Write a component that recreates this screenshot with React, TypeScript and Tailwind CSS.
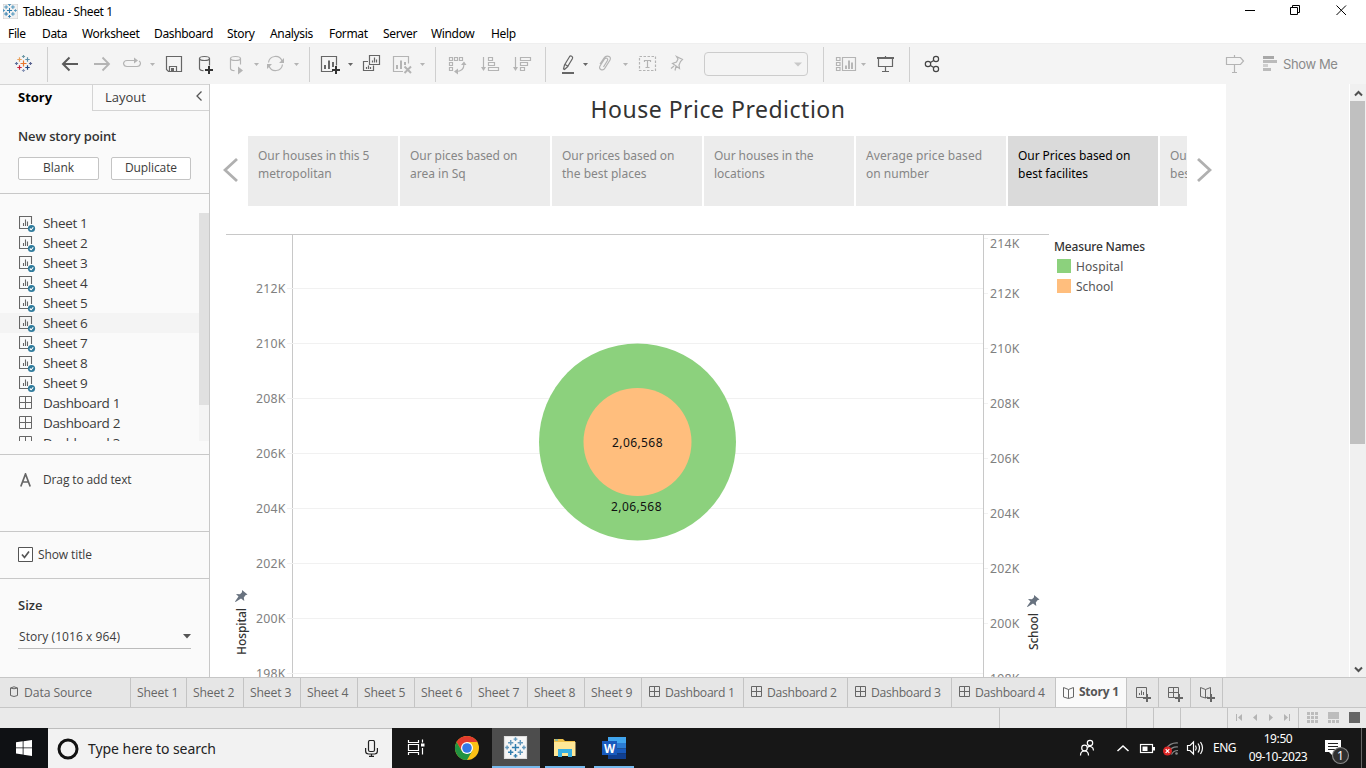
import React from "react";

type IcoProps = { x: number; y: number; w: number; h: number; children?: React.ReactNode; color?: string };

/* An icon cell: its drawing shares one coordinate system with its neighbours. */
function Ico({ x, y, w, h, children, color = "#b4b4b4" }: IcoProps) {
  return (
    <svg className="block shrink-0" width={w} height={h} viewBox={`${x} ${y} ${w} ${h}`} fill="none" stroke={color} strokeWidth="1.2">
      {children}
    </svg>
  );
}

const DARK = "#666";
const LIGHT = "#b4b4b4";

function Tool({ x, w, color, children }: { x: number; w: number; color?: string; children?: React.ReactNode }) {
  return <Ico x={x} y={43} w={w} h={41} color={color}>{children}</Ico>;
}

function Caret({ x, color = LIGHT }: { x: number; color?: string }) {
  return <path d={`M${x} 63h5l-2.5 3z`} fill={color} stroke="none" />;
}

function Rule({ x }: { x: number }) {
  return <path d={`M${x}.5 47v35`} stroke="#cfcfcf" strokeWidth="1" />;
}

function Plus({ x, y, s, c, w = 1.2 }: { x: number; y: number; s: number; c: string; w?: number }) {
  return <path d={`M${x - s} ${y}h${2 * s}M${x} ${y - s}v${2 * s}`} stroke={c} strokeWidth={w} />;
}

function Sparkle({ cx, cy, k, colors }: { cx: number; cy: number; k: number; colors: string[] }) {
  const pts: [number, number, number][] = [
    [0, 0, 3], [-4, -4, 2.2], [4, -4, 2.2], [-4, 4, 2.2], [4, 4, 2.2],
    [0, -7, 1.6], [0, 7, 1.6], [-7, 0, 1.6], [7, 0, 1.6],
  ];
  return <>{pts.map(([dx, dy, s], i) => <Plus key={i} x={cx + dx * k} y={cy + dy * k} s={s * k} c={colors[i % colors.length]} w={1.2 * k} />)}</>;
}

function Toolbar() {
  return (
    <div className="flex h-[41px] shrink-0 border-t border-[#efefef] bg-[#f4f4f4]">
      <div className="-mt-px flex h-[41px]">
        <Tool x={0} w={48}>
          <Sparkle cx={23.5} cy={63.5} k={1} colors={["#e8762c", "#e8a05c", "#5b8fa8", "#c72037", "#1f457e", "#7099a6", "#8a97b8", "#5c6f9a", "#5c6692"]} />
          <Rule x={47} />
        </Tool>
        <Tool x={48} w={39} color="#5b5b5b"><path d="M78 64H63M69.500 57.500L63 64l6.500 6.500" strokeWidth="2" /></Tool>
        <Tool x={87} w={32}><path d="M94 64h15M102.500 57.500L109 64l-6.500 6.500" strokeWidth="1.800" /></Tool>
        <Tool x={119} w={40}>
          <path d="M134 60.500H127a3.500 3.500 0 0 0-3.500 3v0a3.500 3.500 0 0 0 3.500 3h10a3.500 3.500 0 0 0 3.500-3v0a3 3 0 0 0-1.500-2.500" />
          <path d="M134 57.500l4 3-4 3z" fill={LIGHT} stroke="none" /><Caret x={150} />
        </Tool>
        <Tool x={159} w={32} color={DARK}><path d="M166.500 56.500h15v15h-13l-2-2zM169.500 71.500v-5h7v5" /><path d="M171 68h3v3h-3z" fill={DARK} stroke="none" /></Tool>
        <Tool x={191} w={32} color={DARK}>
          <ellipse cx="204.500" cy="58.500" rx="5" ry="2" /><path d="M199.500 58.500v10c0 1.200 1.500 2 4 2.200M209.500 58.500v7" />
          <Plus x={209} y={70} s={4} c="#333" w={2} />
        </Tool>
        <Tool x={223} w={40}>
          <ellipse cx="235.500" cy="58.500" rx="5" ry="2" /><path d="M230.500 58.500v10c0 1.200 1.500 2 4 2.200M240.500 58.500v6" />
          <path d="M238 66.500l5 4-5 4z" fill={LIGHT} stroke="none" /><Caret x={254} />
        </Tool>
        <Tool x={263} w={52}>
          <path d="M268.500 62.500a7 7 0 0 1 13.500-1.500M282.500 64.500a7 7 0 0 1-13.500 1.500" />
          <path d="M284 58v5h-5zM267 69v-5h5z" fill={LIGHT} stroke="none" /><Caret x={294} /><Rule x={309} />
        </Tool>
        <Tool x={315} w={42} color={DARK}>
          <path d="M333 71.500h-11.500v-15h15v9" /><path d="M325 69v-4M329 69v-8.500M333 67v-5" strokeWidth="2" />
          <Plus x={336} y={70} s={4} c="#333" w={2} /><Caret x={348} color={DARK} />
        </Tool>
        <Tool x={357} w={30} color={DARK}>
          <path d="M369.500 55.500h10v9h-10zM368 61.500h-4.500v9h10v-5" /><path d="M372.500 62.500v-2M374.500 62.500v-5M376.500 62.500v-3M366.500 69v-2M368.500 69v-3.500M370.500 69v-2" />
        </Tool>
        <Tool x={387} w={54}>
          <path d="M403 71.500h-9.500v-15h15v7" /><path d="M397 69v-4M401 69v-8.500M405 65v-3" strokeWidth="2" />
          <path d="M404.500 66.500l6.500 6.500M411 66.500l-6.500 6.500" strokeWidth="2" /><Caret x={420} /><Rule x={435} />
        </Tool>
        <Tool x={441} w={32}>
          <path d="M449.500 57.500h3v3h-3zM454.500 57.500h3v3h-3zM459.500 57.500h3v3h-3zM449.500 62.500h3v3h-3zM449.500 67.500h3v3h-3zM464 64c0 4.500-2 7.500-8 7.500" />
          <path d="M461 65l3-3.500 2.500 3.500zM458 68.500l-4 3 4 3z" fill={LIGHT} stroke="none" />
        </Tool>
        <Tool x={473} w={33}>
          <path d="M483.500 57v11M488.500 57.500h4v3h-4zM488.500 62.500h6v3h-6zM488.500 67.500h10v3h-10z" /><path d="M481 67h5l-2.500 4z" fill={LIGHT} stroke="none" />
        </Tool>
        <Tool x={506} w={46}>
          <path d="M515.500 57v11M520.500 57.500h10v3h-10zM520.500 62.500h7v3h-7zM520.500 67.500h4v3h-4z" /><path d="M513 67h5l-2.500 4z" fill={LIGHT} stroke="none" /><Rule x={545} />
        </Tool>
        <Tool x={552} w={41} color={DARK}>
          <path d="M563.500 69l1-4 5-8.300q.8-1.200 2.200-.4t.8 2.200l-5 8.300-3 2.700z M565 64.500l3.500 2" />
          <path d="M562 73h12" strokeWidth="2" /><Caret x={583} color={DARK} />
        </Tool>
        <Tool x={593} w={40}>
          <path d="M600 64l4-6c2-3 8-2 6 2l-5 8c-2 3.500-7 1.500-5-2l4.500-7c1.300-2 4-.5 3 1.500l-4 6.500" /><Caret x={623} />
        </Tool>
        <Tool x={633} w={31}>
          <path d="M639.500 56.500h16v14h-16z" strokeDasharray="2.500 1.500" /><path d="M644.500 62v-1.500h6V62M647.500 60.500v7M645.500 67.500h4" />
        </Tool>
        <Tool x={664} w={40}>
          <path d="M676.500 56.500l6 3-2 2-1.500 3.500.5 3.500-7-5 4-1.500 1.500-3zM676 66.500l-1 4M674 66l-3 2.500" />
        </Tool>
      </div>
      <div className="mt-2 flex h-6 w-[104px] items-center justify-end rounded-sm border border-[#ccc] pr-[5px]">
        <svg width="8" height="5" viewBox="0 0 8 5"><path d="M0 .5h8L4 4.500z" fill="#c8c8c8" /></svg>
      </div>
      <div className="-mt-px flex h-[41px]">
        <Tool x={808} w={62}>
          <Rule x={823} />
          <path d="M836.500 57.500h3.500v3h-3.500zM836.500 62.500h3.500v3h-3.500zM836.500 67.500h3.500v3h-3.500zM842.500 57.500h13v13h-13z" />
          <path d="M846 69v-3.500M849 69v-8.500M852 69v-6.500" strokeWidth="1.900" /><Caret x={861} />
        </Tool>
        <Tool x={870} w={46} color={DARK}>
          <path d="M877 58h17" strokeWidth="2" /><path d="M878.500 58v8.500h14V58M885.500 66.500v5M882 71.500h7M885.500 56v2" /><Rule x={909} />
        </Tool>
        <Tool x={916} w={40} color="#444">
          <circle cx="928" cy="64" r="2.700" /><circle cx="936" cy="59" r="2.600" /><circle cx="936" cy="69" r="2.600" /><path d="M930.500 62.500l3.200-2M930.500 65.500l3.200 2" />
        </Tool>
      </div>
      <div className="-mt-px ml-auto flex h-[41px] items-center">
        <Tool x={1220} w={36}><path d="M1226.500 57.500h14l3 3.500-3 3.500h-14zM1234.500 55v2.500M1234.500 64.500v8M1232 72.500h5" /></Tool>
        <Tool x={1256} w={27}>
          <g stroke="none" fill="#b4b4b4"><path d="M1263 56h11v3h-11z" fill="#a8a8a8" /><path d="M1263 60h14v3h-14zM1263 68h8v3h-8z" fill="#bbb" /><path d="M1263 64h5v3h-5z" fill="#cfcfcf" /></g>
        </Tool>
        <span className="w-[83px] font-[Inter,sans-serif] text-[13px] leading-4 tracking-[-0.4px] text-[#8a8a8a]">Show Me</span>
      </div>
    </div>
  );
}

function SheetIcon() {
  return (
    <svg className="shrink-0" width="17" height="17" viewBox="0 0 17 17" fill="none" stroke="#666" strokeWidth="1.1">
      <path d="M9 12.500H.5V.5h12V8" /><path d="M4.500 10V7M6.500 10V3.500M8.500 10V5.500" />
      <circle cx="12.500" cy="12.500" r="3.600" fill="#2f7a9b" stroke="none" /><path d="M10.800 12.500l1.300 1.300 2.200-2.400" stroke="#fff" />
    </svg>
  );
}
function GridIcon({ s = 13 }: { s?: number }) {
  const e = s - 0.5;
  const m = Math.floor(s / 2) + 0.5;
  return (
    <svg className="block shrink-0" width={s} height={s} fill="none" stroke="#666">
      <path d={`M.5 .5H${e}V${e}H.5zM${m} .5V${e}M.5 ${m}H${e}`} />
    </svg>
  );
}
function BookIcon() {
  return (
    <svg className="shrink-0" width="11" height="12" viewBox="0 0 11 12" fill="none" stroke="#666">
      <path d="M.5 .5l5 2 5-2v9.500l-5 1.500-5-1.500zM5.500 2.500v9" />
    </svg>
  );
}

const side = ["Sheet 1", "Sheet 2", "Sheet 3", "Sheet 4", "Sheet 5", "Sheet 6", "Sheet 7", "Sheet 8", "Sheet 9", "Dashboard 1", "Dashboard 2", "Dashboard 3"];

function SidePanel() {
  return (
    <aside className="flex w-[210px] shrink-0 flex-col border-r border-[#c8c8c8] bg-[#fafafa] font-['Open_Sans',sans-serif] text-[#3c3c3c]">
      <div className="flex h-[27px] shrink-0">
        <div className="w-[92px] border-t border-[#d4d4d4] pt-[3px] pl-[18px] text-[13px] leading-[19px] font-bold text-black">Story</div>
        <div className="flex flex-1 items-start justify-between border-y border-l border-[#d4d4d4] pt-[3px] pr-[7px] pl-3 text-[13px] leading-[19px]">
          <span>Layout</span>
          <svg className="mt-[3px]" width="6" height="10" fill="none" stroke="#555" strokeWidth="1.300"><path d="M5.500 .5L1 5l4.500 4.500" /></svg>
        </div>
      </div>
      <div className="h-[83px] shrink-0 border-b border-[#c8c8c8] px-[18px] pt-4">
        <div className="text-[13px] leading-[18px] font-semibold tracking-[-0.13px] text-[#333]">New story point</div>
        <div className="mt-3 flex gap-3 text-[12px]">
          <div className="flex h-[23px] w-[81px] items-center justify-center rounded-[2px] border border-[#c4c4c4] bg-white pb-px">Blank</div>
          <div className="flex h-[23px] w-20 items-center justify-center rounded-[2px] border border-[#c4c4c4] bg-white pb-px tracking-[-0.1px]">Duplicate</div>
        </div>
      </div>
      <div className="h-[261px] shrink-0 border-b border-[#c8c8c8] pt-[19px]">
        <div className="flex h-[228px] overflow-hidden">
          <div className="w-[199px]">
            {side.map((s, i) => (
              <div key={s} className={i === 5 ? "flex h-5 items-start bg-[#f4f4f4] pt-[3px] pl-[19px]" : "flex h-5 items-start pt-[3px] pl-[19px]"}>
                <span className="w-6 shrink-0">{i < 9 ? <SheetIcon /> : <GridIcon />}</span>
                <span className="-mt-0.5 text-[13.500px] leading-[18px] tracking-[-0.35px]">{s}</span>
              </div>
            ))}
          </div>
          <div className="w-2.5 bg-[#f4f4f4]"><div className="h-48 bg-[#e0e0e0]" /></div>
        </div>
      </div>
      <div className="flex h-[77px] shrink-0 items-start border-b border-[#c8c8c8] pt-4 pl-5 text-[12px]">
        <svg width="12" height="14" className="mt-[2px] mr-[11px]" fill="none" stroke="#666" strokeWidth="1.700"><path d="M.8 13.500L5.500 1l4.700 12.500M2.500 9h6" /></svg>
        <span className="leading-[18px] tracking-[-0.13px]">Drag to add text</span>
      </div>
      <div className="flex h-[47px] shrink-0 items-center border-b border-[#c8c8c8] pb-px pl-[18px] text-[12px] tracking-[-0.1px]">
        <svg width="15" height="15" className="mr-[5px]" fill="none" stroke="#555"><path d="M.5 .5h14v14H.5z" fill="#fff" /><path d="M4 7.500l2.500 3L11 4.500" strokeWidth="1.700" /></svg>
        <span>Show title</span>
      </div>
      <div className="px-[18px] pt-[17px]">
        <div className="text-[13px] leading-[18px] font-semibold text-[#333]">Size</div>
        <div className="mt-[11px] flex h-6 w-[173px] items-center justify-between border-b border-[#bbb] pl-px text-[12px] tracking-[0.07px]">
          Story (1016 x 964)
          <svg width="8" height="5"><path d="M0 0h8L4 4.500z" fill="#555" /></svg>
        </div>
      </div>
    </aside>
  );
}

const cards: [string, string][] = [
  ["Our houses in this 5", "metropolitan"],
  ["Our pices based on", "area in Sq"],
  ["Our prices based on", "the best places"],
  ["Our houses in the", "locations"],
  ["Average price based", "on number"],
  ["Our Prices based on", "best facilites"],
];

function Pin({ x, y }: { x: number; y: number }) {
  return <path transform={`translate(${x} ${y})`} d="M7 0l5.500 4.500-2 .8-1.700 2.200.5 3.500-3.300-2.500L.5 12l-.5-.5L3.500 6.500 1 4l4 .2L7 2.200z" fill="#68727f" />;
}

function Chart() {
  return (
    <svg className="mt-7 ml-4 block shrink-0 font-['Noto_Sans',sans-serif]" width="823" height="443" viewBox="226 234 823 443">
      <path d="M226 234.500h823M292.500 234v443M983.500 234v443" stroke="#c8c8c8" />
      <path d="M287 288.500h696M287 343.500h696M287 398.500h696M287 453.500h696M287 508.500h696M287 563.500h696M287 618.500h696M287 673.500h696M984 238.500h4M984 293.500h4M984 348.500h4M984 403.500h4M984 458.500h4M984 513.500h4M984 568.500h4M984 623.500h4" stroke="#f1f1f1" />
      <g fontSize="12.300" fill="#808080">
        {[212, 210, 208, 206, 204, 202, 200, 198].map((n, i) => <text key={n} x="256" y={293 + i * 55} textLength="29.300">{n}K</text>)}
        <text x="990" y="248" textLength="29.300">214K</text>
        {[212, 210, 208, 206, 204, 202, 200, 198].map((n, i) => <text key={n} x="990" y={298 + i * 55} textLength="29.300">{n}K</text>)}
      </g>
      <circle cx="637.500" cy="442" r="98.500" fill="#8cd17d" />
      <circle cx="637.500" cy="442" r="54" fill="#ffbe7d" />
      <g fontSize="12" fill="#111">
        <text x="612" y="447" textLength="50.500">2,06,568</text>
        <text x="611" y="511" textLength="50.500">2,06,568</text>
      </g>
      <g fontSize="12" fill="#333" fontWeight="500">
        <text transform="translate(246 655) rotate(-90)" textLength="47">Hospital</text>
        <text transform="translate(1038 650) rotate(-90)" textLength="37">School</text>
      </g>
      <Pin x={235} y={590} /><Pin x={1027} y={595} />
    </svg>
  );
}

function Story() {
  return (
    <main className="flex min-w-0 flex-1 bg-[#f4f4f4]">
      <div className="w-[1016px] shrink-0 overflow-hidden bg-white font-['Noto_Sans',sans-serif]">
        <h1 className="h-[52px] pt-2 text-center text-[23px] leading-[34px] text-[#333]"><span className="tracking-[0.5px]">House Price Prediction</span></h1>
        <div className="flex h-[70px] items-center">
          <svg className="mr-2.5 mb-0.5 ml-[13px] shrink-0" width="15" height="26" fill="none" stroke="#b0b0b0" strokeWidth="2.800"><path d="M14 2L2 13l12 11" /></svg>
          <div className="flex h-[70px] w-[939px] gap-0.5 overflow-hidden text-[12px] leading-[18px]">
            {cards.map(([a, b], i) => (
              <div key={i} className={i === 5 ? "w-[150px] shrink-0 bg-[#dadada] pt-[11px] pl-2.5 text-black" : "w-[150px] shrink-0 bg-[#ececec] pt-[11px] pl-2.5 text-[#868686]"}>
                <div className={i === 4 ? "tracking-[0.1px] whitespace-nowrap" : "tracking-[-0.06px] whitespace-nowrap"}>{a}</div><div>{b}</div>
              </div>
            ))}
            <div className="w-[150px] shrink-0 bg-[#ececec] pt-[11px] pl-2.5 text-[#868686]">Our<br />best</div>
          </div>
          <svg className="mb-0.5 ml-2.5 shrink-0" width="15" height="26" fill="none" stroke="#b0b0b0" strokeWidth="2.800"><path d="M1 2l12 11L1 24" /></svg>
        </div>
        <div className="flex">
          <Chart />
          <div className="mt-8 ml-[5px] text-[12px] text-[#555]">
            <div className="leading-[18px] font-medium tracking-[-0.18px] whitespace-nowrap text-[#333]">Measure Names</div>
            <div className="flex h-5 items-center gap-[5px] pl-[3px]"><i className="size-3.5 bg-[#8cd17d]" /><span className="mt-0.5 tracking-[0.1px]">Hospital</span></div>
            <div className="flex h-5 items-center gap-[5px] pl-[3px]"><i className="size-3.5 bg-[#ffbe7d]" /><span className="mt-0.5">School</span></div>
          </div>
        </div>
      </div>
      <div className="ml-auto flex w-[17px] flex-col items-center border-l border-white bg-[#f0f0f0]">
        <svg className="mt-1.5 shrink-0" width="9" height="7" fill="none" stroke="#505050" strokeWidth="2"><path d="M1 5.500L4.500 2 8 5.500" /></svg>
        <div className="mt-1 h-[343px] w-[15px] self-start bg-[#c0c0c0]" />
        <svg className="mt-auto mb-1" width="9" height="7" fill="none" stroke="#505050" strokeWidth="2"><path d="M1 1.500L4.500 5 8 1.500" /></svg>
      </div>
    </main>
  );
}

const cell = "flex h-full shrink-0 items-center border-r border-[#c4c4c4]";

function SheetTabs() {
  const w = [56, 57, 57, 57, 57, 57, 56, 57, 57];
  const d = [102, 104, 104, 104];
  return (
    <div className="flex h-[31px] shrink-0 border-y border-[#c6c6c6] bg-[#e6e6e6] font-['Open_Sans',sans-serif] text-[12.200px] whitespace-nowrap text-[#666]">
      <div className={cell + " w-[131px] pl-2.5"}>
        <svg className="mr-1.5 mb-[2px]" width="8" height="11" fill="none" stroke="#666"><path d="M.5 2v7.500q3.500 2 7 0V2q-3.500-2.500-7 0q3.500 1.500 7 0" /></svg>
        <span className="pt-0.5 tracking-[-0.1px]">Data Source</span>
      </div>
      {w.map((n, i) => <div key={i} className={cell + " pt-0.5 pl-1.5 tracking-[-0.15px]"} style={{ width: n }}>Sheet {i + 1}</div>)}
      {d.map((n, i) => <div key={i} className={cell + " gap-[5px] pl-[7px]"} style={{ width: n }}><span className="mb-0.5"><GridIcon s={11} /></span><span className="pt-0.5 tracking-[-0.3px]">Dashboard {i + 1}</span></div>)}
      <div className={cell + " w-[71px] gap-[5px] bg-[#fafafa] pl-[7px] text-[12px] tracking-[-0.25px] font-bold text-[#555]"}><BookIcon /><span className="pb-0.5">Story 1</span></div>
      {[0, 1, 2].map((k) => (
        <div key={k} className={cell + " w-8 pt-0.5 pl-[9px]"}>
          <svg width="16" height="16" viewBox="0 0 16 16" fill="none" stroke="#666">
            {k === 0 && <path d="M8 11.500H.5V1.500h10V8M3.500 9V7M5.500 9V4.500M7.500 9V6" />}
            {k === 1 && <path d="M8 11.500H.5V1.500h10V8M5.500 1.500v10M.5 6.500h10" />}
            {k === 2 && <path d="M8 11l-2.500 1-5-1.500v-9l5 2 5-2V8M5.500 3.500v8.500" />}
            <path d="M7 12h8M11 8v8" strokeWidth="2" />
          </svg>
        </div>
      ))}
    </div>
  );
}

function StatusBar() {
  return (
    <div className="flex h-5 shrink-0 bg-[#eaeaea]">
      <div className={cell + " w-[1000px]"} />
      <div className={cell + " w-[127px]"} />
      <div className={cell + " w-[27px]"} />
      <div className={cell + " w-[27px]"} />
      <div className={cell + " w-[47px]"} />
      <div className={cell + " w-[71px]"}>
        <Ico x={1228} y={708} w={70} h={20}>
          <g fill="#b4b4b4" stroke="none"><path d="M1236 714h1v7h-1zM1242 714v7l-4-3.500zM1257 714v7l-4-3.500zM1269 714v7l4-3.500zM1284 714v7l4-3.500zM1289 714h1v7h-1z" /></g>
        </Ico>
      </div>
      <Ico x={1299} y={708} w={67} h={20}>
        <g fill="#bcbcbc" stroke="none">
          {[0, 1, 2].map((r) => [0, 1, 2].map((c) => <rect key={`${r}${c}`} x={1307 + c * 4} y={712 + r * 4} width="3" height="3" />))}
          <path d="M1328 712h11v7h-11zM1328 720h3v3h-3zM1332 720h3v3h-3zM1336 720h3v3h-3z" />
          <path d="M1349 712h11v11h-11z" fill="#666" />
        </g>
      </Ico>
    </div>
  );
}

function Taskbar() {
  return (
    <div className="flex h-10 shrink-0 bg-[#171717] font-['Noto_Sans',sans-serif] text-white">
      <div className="flex w-12 items-center justify-center bg-[#0f1114]">
        <svg width="16" height="16" fill="#fff"><path d="M0 2.300l6.700-1V7.500H0zM7.500 1.200L16 0v7.500H7.500zM0 8.300h6.700v6.300l-6.700-1zM7.500 8.300H16V16l-8.500-1.200z" /></svg>
      </div>
      <div className="flex w-[344px] items-center border-t border-[#bdbdbd] bg-[#f2f2f2] pl-[9px] text-[#222]">
        <svg width="22" height="22" className="mr-[9px]" fill="none"><circle cx="11" cy="11" r="9" stroke="#111" strokeWidth="3" /></svg>
        <span className="text-[14px] tracking-[-0.05px]">Type here to search</span>
        <svg className="mr-3.5 ml-auto" width="13" height="17" fill="none" stroke="#222" strokeWidth="1.200"><rect x="3.500" y=".5" width="6" height="11" rx="1.500" /><path d="M.6 8v3q0 3 3 3h6q2.800 0 2.800-3V8M6.500 14v2.500M4 16.400h5" /></svg>
      </div>
      <Ico x={392} y={728} w={48} h={40} color="#fff">
        <path d="M408.500 740v2.500h10V740M408.500 744.500h10v6h-10zM408.500 755v-2.500h10v2.500M422.500 739.500v3M422.500 748v6.500" /><path d="M421 743.500h3.500v3H421z" fill="#fff" stroke="none" />
      </Ico>
      <Ico x={440} y={728} w={52} h={40}>
        <g stroke="none">
          <circle cx="467" cy="748" r="12" fill="#fbc116" />
          <path d="M467 742h10.400A12 12 0 0 0 456.600 742l5.200 9z" fill="#e33b2e" />
          <path d="M456.600 742A12 12 0 0 0 467 760l5.200-9-5.200 3-5.200-3z" fill="#229342" />
          <circle cx="467" cy="748" r="6" fill="#fff" /><circle cx="467" cy="748" r="4.800" fill="#3478e5" />
        </g>
      </Ico>
      <div className="w-12 border-b-2 border-[#76b9ed] bg-[#4d4d4d]">
        <Ico x={492} y={728} w={48} h={38}>
          <path d="M504.500 736.500h22v22h-22z" fill="#f6f6f6" stroke="#ddd" /><Sparkle cx={515.5} cy={747.5} k={1.2} colors={["#2f7dae", "#6299bd", "#6299bd"]} />
        </Ico>
      </div>
      <div className="ml-[5px] w-10 border-b-2 border-[#76b9ed]">
        <Ico x={545} y={728} w={40} h={38}>
          <g stroke="none"><path d="M554 739h9l2 2h10v15h-21z" fill="#f0c14a" /><path d="M554 742h21.500v14H554z" fill="#ffe796" /><path d="M558 757v-8h14v8h-4v-4h-6v4z" fill="#38b0e3" /><path d="M555 739.500h3v1h-3z" fill="#38b0e3" /></g>
        </Ico>
      </div>
      <div className="ml-[9px] w-10 border-b-2 border-[#76b9ed]">
        <Ico x={594} y={728} w={40} h={38}>
          <g stroke="none"><path d="M608 737h18v6h-18z" fill="#41a5ee" /><path d="M608 743h18v5.500h-18z" fill="#2b7cd3" /><path d="M608 748.500h18v5h-18z" fill="#185abd" /><path d="M608 753.500h18v5.500h-18z" fill="#103f91" /><path d="M602 741h15v14h-15z" fill="#185abd" /></g>
          <text x="604" y="752.500" fontSize="11.500" fontWeight="700" fill="#fff" stroke="none">W</text>
        </Ico>
      </div>
      <div className="ml-auto flex items-center">
        <Ico x={1070} y={728} w={143} h={40} color="#fff">
          <circle cx="1084.500" cy="748" r="2.800" /><path d="M1080.500 755.500c0-6 8-6 8 0" /><circle cx="1090" cy="743" r="2.700" /><path d="M1087.500 747.500c2-2 6-1 6 3" />
          <path d="M1117.500 751l5.500-5 5.500 5" strokeWidth="1.500" />
          <rect x="1140.500" y="744.500" width="12" height="8" /><path d="M1142.500 746.500h5v4.500h-5z" fill="#fff" stroke="none" /><path d="M1154 747v3.500" strokeWidth="2" />
          <g stroke="#888"><path d="M1166 749a13 13 0 0 1 12-6M1168.500 752a10 10 0 0 1 9.500-5M1171.500 754.500a7 7 0 0 1 6.500-4" /></g><circle cx="1176.500" cy="753.500" r="1.300" fill="#888" stroke="none" />
          <circle cx="1167.500" cy="751" r="4.500" fill="#dc2626" stroke="none" /><path d="M1165.700 749.200l3.600 3.600M1169.300 749.200l-3.600 3.600" />
          <path d="M1187.500 745.500h2.500l3.500-3.500v12l-3.500-3.500h-2.500zM1195.500 745.500q1.500 2.500 0 5M1198 743.500q3 4.500 0 9M1200.500 742q4 6 0 12" />
        </Ico>
        <span className="w-[35px] text-[12px] tracking-[-0.5px]">ENG</span>
        <div className="w-[60px] text-center text-[12px] leading-[18px] tracking-[-0.4px] whitespace-nowrap">19:50<br />09-10-2023</div>
        <Ico x={1308} y={728} w={58} h={40}>
          <path d="M1325 740h16v12h-8v4l-4-4h-4z" fill="#fff" stroke="none" /><path d="M1328 743.500h10M1328 746.500h10M1328 749.500h7" stroke="#222" />
          <circle cx="1340.500" cy="755.500" r="8" fill="#303030" stroke="#888" /><text x="1337" y="760" fontSize="12" fill="#fff" stroke="none">1</text>
          <path d="M1361.500 728v40" stroke="#666" strokeWidth="1" />
        </Ico>
      </div>
    </div>
  );
}

const menus: [string, number][] = [["File", 34], ["Data", 40], ["Worksheet", 72], ["Dashboard", 73], ["Story", 43], ["Analysis", 59], ["Format", 54], ["Server", 48], ["Window", 60], ["Help", 40]];

export default function App() {
  return (
    <div className="flex h-[768px] w-[1366px] flex-col overflow-hidden bg-white">
      <header className="flex h-[22px] shrink-0 items-center font-['Noto_Sans',sans-serif] text-[12px] text-black">
        <svg className="ml-[3px] mr-[5px]" width="15" height="15" viewBox="0 0 15 15"><path d="M0 0h15v15H0z" fill="#f1f1f1" stroke="#ccc" /><Sparkle cx={6.5} cy={6.5} k={0.85} colors={["#2f7dae", "#4f95bd", "#4f95bd"]} /></svg>
        <span className="pt-0.5 tracking-[-0.35px]">Tableau - Sheet 1</span>
        <svg className="mr-[19px] mb-0.5 ml-auto" width="102" height="12" viewBox="1245 4 102 12" fill="none" stroke="#000"><path d="M1245 10.500h10M1290.500 7.500h7v7h-7zM1292.500 7v-1.500h7v7H1298M1336.500 5.500l9.500 9.500M1346 5.500l-9.500 9.500" /></svg>
      </header>
      <nav className="flex h-[21px] shrink-0 items-center pt-0.5 pl-2 font-['Noto_Sans',sans-serif] text-[12px] tracking-[-0.35px] text-black">
        {menus.map(([m, w]) => <span key={m} className="shrink-0" style={{ width: w }}>{m}</span>)}
      </nav>
      <Toolbar />
      <div className="flex h-[593px] shrink-0 overflow-hidden"><SidePanel /><Story /></div>
      <SheetTabs />
      <StatusBar />
      <Taskbar />
    </div>
  );
}
